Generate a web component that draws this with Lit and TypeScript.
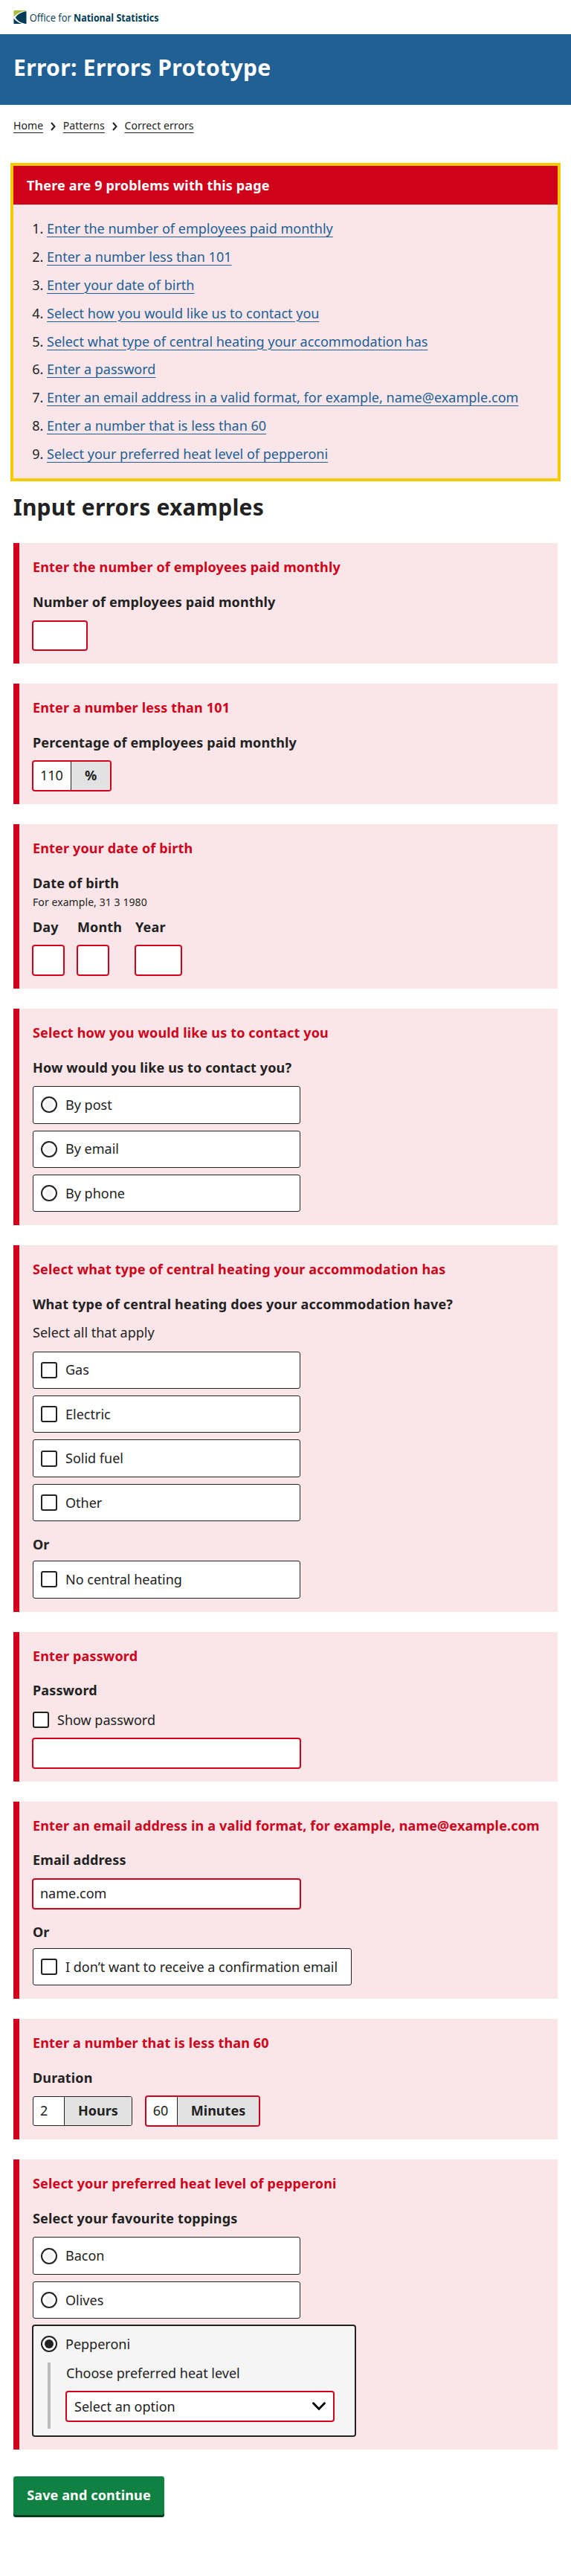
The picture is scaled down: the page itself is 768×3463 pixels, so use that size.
import { LitElement, html, css, svg } from "lit";
import { customElement } from "lit/decorators.js";

const ERRORS = [
  "Enter the number of employees paid monthly",
  "Enter a number less than 101",
  "Enter your date of birth",
  "Select how you would like us to contact you",
  "Select what type of central heating your accommodation has",
  "Enter a password",
  "Enter an email address in a valid format, for example, name@example.com",
  "Enter a number that is less than 60",
  "Select your preferred heat level of pepperoni",
];

const chevron = html`<svg class="chev" viewBox="0 0 7 12" width="7" height="12" aria-hidden="true">
  <path d="M1 1 5.500 6 1 11" fill="none" stroke="#222" stroke-width="2"/></svg>`;

@customElement("app-root")
export class AppRoot extends LitElement {
  static styles = css`
    :host { display: block; background: #fff; color: #222; font: 400 18px/28.8px "Noto Sans", sans-serif; height: 3463px; }
    * { box-sizing: border-box; }
    .top { height: 46px; padding: 14px 18px 0; }
    .logo { display: block; overflow: visible; }
    .hero { background: #206095; height: 95px; padding: 24.5px 18px 0; }
    h1 { margin: 0; color: #fff; font-size: 30px; line-height: 40px; letter-spacing: 0.35px; }
    .crumbs { display: flex; align-items: center; padding: 13px 18px 0; height: 42px; font-size: 14px; line-height: 22px; letter-spacing: 0.08px; }
    .crumbs a { color: #222; }
    a { text-decoration: underline 1px; text-underline-position: under; color: #206095; }
    .chev { margin: 3px 9.6px 0 10px; }
    main { padding: 40px 18px 0; }
    .summary { background: #fae6e8; outline: 4px solid #fbc900; }
    .summary h2 { margin: 0; background: #d0021b; color: #fff; font-size: 18px; letter-spacing: 0.14px; height: 52px; line-height: 28.8px; padding: 12px 18px; }
    ol { margin: 0; padding: 18px 18px 18px 45px; display: flex; flex-direction: column; gap: 9.1px; letter-spacing: 0.01px; }
    .title { margin: 20px 0 28.4px; font-size: 30px; line-height: 38.8px; letter-spacing: 0.22px; }
    .panel { background: #fae6e8; border-left: 8px solid #d0021b; padding: 18px; margin-bottom: 27px; }
    .err { color: #d0021b; font-weight: 700; margin: 0 0 18px; letter-spacing: 0.155px; }
    .label { font-weight: 700; margin: 0 0 10.8px; letter-spacing: 0.13px; }
    .plain { font-weight: 400; letter-spacing: 0; }
    .tight { margin-bottom: 9px; }
    .none { margin-bottom: 0; }
    .hint { font-size: 14px; line-height: 21px; margin: 0 0 9px; letter-spacing: 0.08px; }
    .input { display: flex; align-items: center; height: 39.6px; background: #fff; border: 1px solid #222; border-radius: 3px; padding: 0 9px; width: 360px; }
    .bad { border-color: #d0021b; box-shadow: 0 0 0 1px #d0021b; }
    .n3 { width: 73px; } .n2 { width: 42px; } .n4 { width: 62px; }
    .row { display: flex; gap: 18px; }
    .unit { padding: 0; width: auto; display: inline-flex; align-items: stretch; overflow: hidden; line-height: 37.6px; }
    .val { padding: 0 9px; width: 41px; }
    .val3 { width: 50px; padding: 0 9px; }
    .suffix { background: #e2e2e3; border-left: 1px solid #222; font-weight: 700; padding: 0 18px; }
    .opts { display: flex; flex-direction: column; gap: 9px; align-items: flex-start; }
    .opt { border: 1px solid #222; border-radius: 3px; background: #fff; min-width: 360px; padding: 9.8px 18px 9.8px 10px; }
    .pick { display: flex; align-items: center; gap: 11px; }
    .box, .dot { width: 22px; height: 22px; flex: none; border: 2px solid #222; border-radius: 3px; background: #fff; }
    .dot { border-radius: 50%; padding: 3px; }
    .dot::before { content: ""; display: block; width: 12px; height: 12px; border-radius: 50%; background: #f5f5f6; }
    .on .dot::before { background: #222; }
    .on { background: #f5f5f6; box-shadow: 0 0 0 1px #222; width: 434px; height: 148.8px; padding-right: 0; }
    .sub { margin: 10px 0 0 9px; border-left: 4px solid #bcbcbd; padding: 0 0 10.4px 21px; }
    .select { justify-content: space-between; padding-right: 10px; padding-left: 10px; }
    .or { font-weight: 700; margin: 17px 0 7.3px; }
    .show { margin-bottom: 10.2px; }
    .btn { display: block; margin: 36px 0 0; border: 0; background: #0f8243; color: #fff; font: 700 18px/28.8px "Noto Sans", sans-serif; letter-spacing: 0.12px; border-radius: 3px; box-shadow: 0 3px 0 #003c1c; height: 52px; width: 203px; padding: 0 0 1px; }
  `;

  panel(error: string, body: unknown) {
    return html`<section class="panel"><p class="err">${error}</p>${body}</section>`;
  }
  radio(text: string) {
    return html`<div class="opt"><div class="pick"><span class="dot"></span>${text}</div></div>`;
  }
  check(text: string) {
    return html`<div class="opt"><div class="pick"><span class="box"></span>${text}</div></div>`;
  }
  label(text: string, extra = "") {
    return html`<p class="label ${extra}">${text}</p>`;
  }

  render() {
    return html`
      <header class="top">
        <svg class="logo" width="198" height="18" viewBox="0 0 198 18" role="img">
          <path d="M.500 0H17.500V.600C10 1.500 4 4.500 .500 9Z" fill="#a8bd3a"/>
          <path d="M17.500 1.300V18H16C9 16.500 5 13.500 2.800 9.500C6 5 11 2 17.500 1.300Z" fill="#003c57"/>
          <path d="M.500 10.500C3 14 6.500 16.500 11.500 18H.500Z" fill="#003c57"/>
          ${svg`<text x="21.700" y="14.600" font-family="Open Sans, sans-serif" font-size="15" fill="#003c57" textLength="56" lengthAdjust="spacingAndGlyphs">Office for</text>
          <text x="81" y="14.600" font-family="Open Sans, sans-serif" font-weight="700" font-size="15" fill="#003c57" textLength="114.500" lengthAdjust="spacingAndGlyphs">National Statistics</text>`}
        </svg>
      </header>
      <div class="hero"><h1>Error: Errors Prototype</h1></div>
      <nav class="crumbs"><a>Home</a>${chevron}<a>Patterns</a>${chevron}<a>Correct errors</a></nav>
      <main>
        <div class="summary">
          <h2>There are 9 problems with this page</h2>
          <ol>${ERRORS.map((e) => html`<li><a>${e}</a></li>`)}</ol>
        </div>
        <h2 class="title">Input errors examples</h2>
        ${this.panel(ERRORS[0], html`${this.label("Number of employees paid monthly")}<div class="input bad n3"></div>`)}
        ${this.panel(ERRORS[1], html`${this.label("Percentage of employees paid monthly")}
          <div class="row"><div class="input bad unit"><span class="val val3">110</span><span class="suffix">%</span></div></div>`)}
        ${this.panel(ERRORS[2], html`${this.label("Date of birth", "none")}
          <p class="hint">For example, 31 3 1980</p>
          <div class="row">
            <div>${this.label("Day")}<div class="input bad n2"></div></div>
            <div>${this.label("Month")}<div class="input bad n2"></div></div>
            <div>${this.label("Year")}<div class="input bad n4"></div></div>
          </div>`)}
        ${this.panel(ERRORS[3], html`${this.label("How would you like us to contact you?")}
          <div class="opts">${["By post", "By email", "By phone"].map((t) => this.radio(t))}</div>`)}
        ${this.panel(ERRORS[4], html`${this.label("What type of central heating does your accommodation have?", "tight")}
          ${this.label("Select all that apply", "plain")}
          <div class="opts">${["Gas", "Electric", "Solid fuel", "Other"].map((t) => this.check(t))}</div>
          <p class="or">Or</p><div class="opts">${this.check("No central heating")}</div>`)}
        ${this.panel("Enter password", html`${this.label("Password")}
          <div class="pick show"><span class="box"></span>Show password</div><div class="input bad"></div>`)}
        ${this.panel(ERRORS[6], html`${this.label("Email address")}<div class="input bad">name.com</div>
          <p class="or">Or</p><div class="opts">${this.check("I don’t want to receive a confirmation email")}</div>`)}
        ${this.panel(ERRORS[7], html`${this.label("Duration")}
          <div class="row">
            <div class="input unit"><span class="val">2</span><span class="suffix">Hours</span></div>
            <div class="input unit bad"><span class="val">60</span><span class="suffix">Minutes</span></div>
          </div>`)}
        ${this.panel(ERRORS[8], html`${this.label("Select your favourite toppings")}
          <div class="opts">
            ${this.radio("Bacon")}${this.radio("Olives")}
            <div class="opt on">
              <div class="pick"><span class="dot"></span>Pepperoni</div>
              <div class="sub">
                ${this.label("Choose preferred heat level", "plain")}
                <div class="input bad select">Select an option
                  <svg width="18" height="12" viewBox="0 0 18 12" aria-hidden="true"><path d="M1.500 1.800 9 9.500 16.500 1.800" fill="none" stroke="#000" stroke-width="2.800" stroke-linecap="round"/></svg>
                </div>
              </div>
            </div>
          </div>`)}
        <button class="btn">Save and continue</button>
      </main>`;
  }
}
